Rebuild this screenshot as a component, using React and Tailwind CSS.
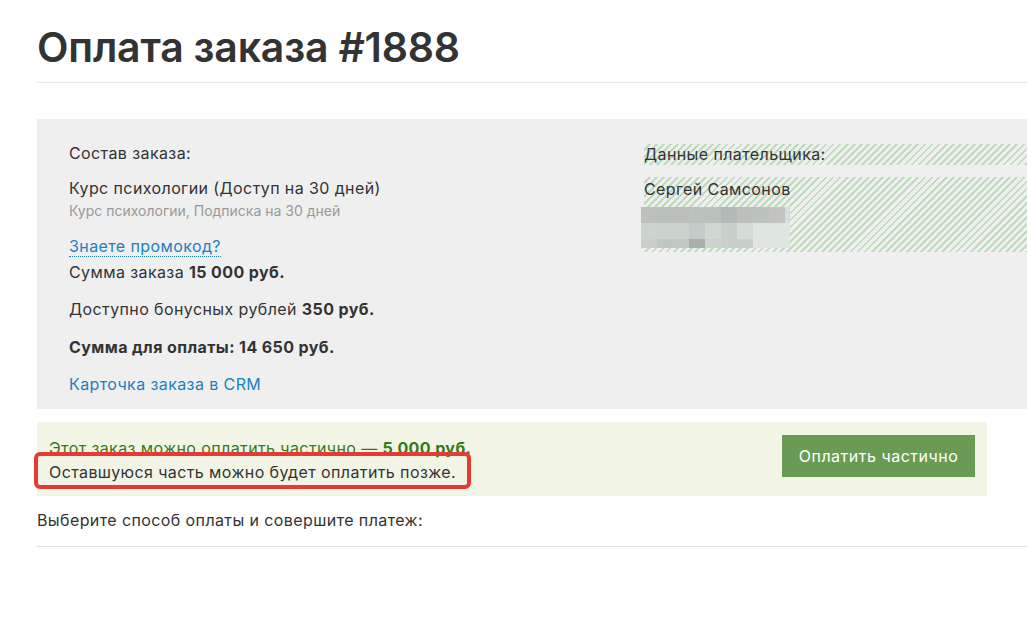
import React from "react"

const hatch = {
  backgroundImage:
    "repeating-linear-gradient(135deg, transparent 0px, transparent 3px, #bcdcbc 3px, #bcdcbc 5px)",
}

const blurCells = [
  ["#bcc1bc", "#b9bfbb", "#babfba", "#bcc2bd", "#bbc1bb", "#b3b9b6", "#bbc0bb", "#bcc2be", "#c3c3c0", "#d6dfdd"],
  ["#cdd4cf", "#cad2cc", "#cbd3cd", "#c4cbc8", "#d1d8d3", "#c9cfcb", "#d5dbd7", "#dfe5e0", "#dfe5e0", "#dfe5e0"],
  ["#c9cfcb", "#c1c7c3", "#c2c9c4", "#a9afad", "#ccd3ce", "#c9cfcb", "#c9d0cc", "#dfe5e0", "#dfe5e0", "#dfe5e0"],
]

// redacted payer contacts, drawn as a coarse pixel mosaic
function PixelBlock() {
  return (
    <div className="grid w-[149px] grid-cols-[repeat(9,16px)_5px] grid-rows-[16px_16px_9px]">
      {blurCells.flatMap((row, r) =>
        row.map((c, i) => <div key={`${r}-${i}`} style={{ backgroundColor: c }} />)
      )}
    </div>
  )
}

export default function App() {
  return (
    <div className="min-h-[637px] w-[1027px] overflow-hidden bg-white font-['Inter',sans-serif] text-[#333]">
      <div className="pl-[37px]">
        <h1 className="pt-[24px] pb-[12px] text-[41px] leading-[46px] font-semibold tracking-[-0.2px] text-[#333]">
          Оплата заказа #1888
        </h1>
        <div className="h-px bg-[#e9e9e9]" />

        <div className="mt-[36px] flex h-[290px] bg-[#efefef] pt-[24px] pl-[32px] text-[16px] tracking-[0.4px]">
          <div className="w-[575px]">
            <p className="leading-[20px]">Состав заказа:</p>
            <p className="mt-[15px] leading-[20px]">Курс психологии (Доступ на 30 дней)</p>
            <p className="mt-[5px] text-[14px] leading-[16px] tracking-normal text-[#999]">
              Курс психологии, Подписка на 30 дней
            </p>
            <a className="mt-[18px] inline-block border-b border-dotted border-[#1e7fc2] leading-[19px] text-[#1e7fc2]">
              Знаете промокод?
            </a>
            <p className="mt-[3px] leading-[22px]">
              Сумма заказа <b className="font-bold">15 000 руб.</b>
            </p>
            <p className="mt-[15px] leading-[22px]">
              Доступно бонусных рублей <b className="font-bold">350 руб.</b>
            </p>
            <p className="mt-[16px] leading-[22px] font-bold">Сумма для оплаты: 14 650 руб.</p>
            <a className="mt-[15px] block leading-[22px] text-[#1e7fc2]">Карточка заказа в CRM</a>
          </div>
          <div className="flex-1">
            <p className="mt-[1px] py-[1px] leading-[19px]" style={hatch}>
              Данные плательщика:
            </p>
            <div className="mt-[12px] h-[75px]" style={hatch}>
              <p className="leading-[24px]">Сергей Самсонов</p>
              <div className="ml-[-3px] mt-[6px]">
                <PixelBlock />
              </div>
            </div>
          </div>
        </div>

        <div className="mt-[13px] flex h-[74px] w-[950px] items-center justify-between bg-[#f2f5e5] pr-[12px] text-[16px] tracking-[0.4px]">
          <div className="relative pl-[12px] pt-[1px]">
            <p className="leading-[24px] text-[#2e7d1a]">
              Этот заказ можно оплатить частично — <b className="font-bold">5 000 руб.</b>
            </p>
            <div className="absolute left-[-3px] top-[17px] h-[37px] w-[437px] rounded-[6px] border-[4px] border-[#e53b34]" />
            <p className="leading-[24px] text-[#333]">Оставшуюся часть можно будет оплатить позже.</p>
          </div>
          <button className="mt-[-6px] h-[42px] w-[193px] bg-[#6a9b54] text-[16px] tracking-[0.5px] text-white">
            Оплатить частично
          </button>
        </div>

        <p className="mt-[13px] text-[16px] leading-[22px] tracking-[0.4px]">Выберите способ оплаты и совершите платеж:</p>
        <div className="mt-[15px] h-px bg-[#dddddd]" />
      </div>
    </div>
  )
}
